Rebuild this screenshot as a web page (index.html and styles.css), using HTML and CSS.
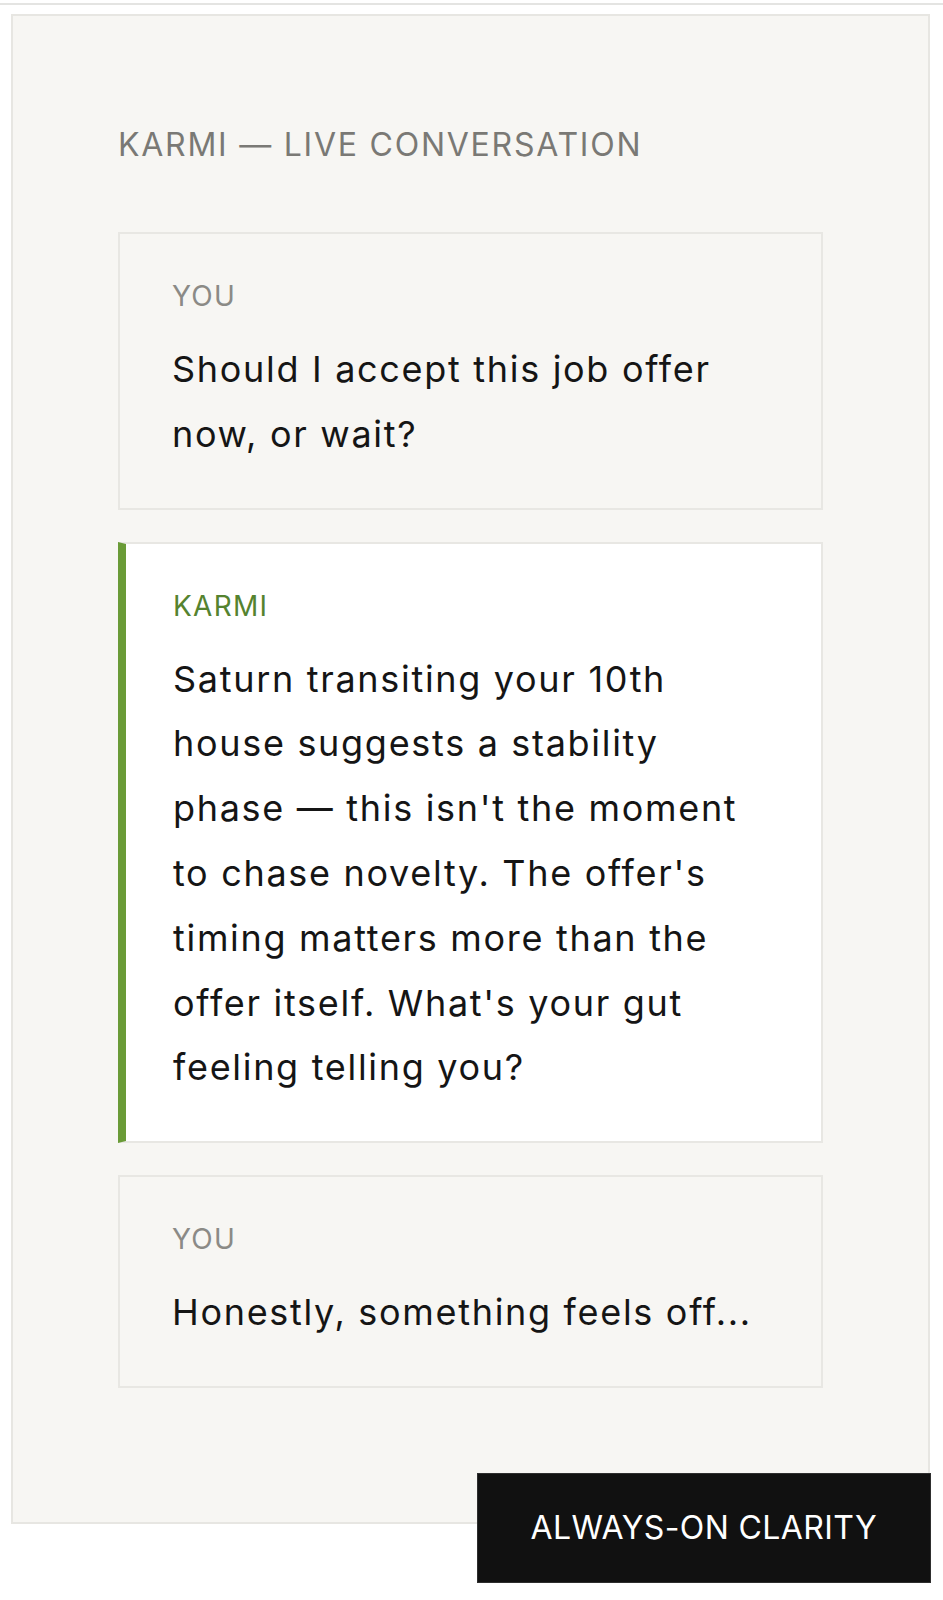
FILE: index.html
```html
<!DOCTYPE html>
<html>
<head>
    <title>Karmi — Live Conversation</title>
    <link rel="stylesheet" href="styles.css">
</head>
<body>

<div class="rule"></div>

<div class="stage">
    <section class="panel">
        <h2 class="panel-title">KARMI — LIVE CONVERSATION</h2>

        <div class="thread">
            <div class="msg msg-you">
                <div class="who">YOU</div>
                <p>Should I accept this job offer now, or wait?</p>
            </div>

            <div class="msg msg-karmi">
                <div class="who">KARMI</div>
                <p>Saturn transiting your 10th house suggests a stability phase — this isn't the moment to chase novelty. The offer's timing matters more than the offer itself. What's your gut feeling telling you?</p>
            </div>

            <div class="msg msg-you">
                <div class="who">YOU</div>
                <p>Honestly, something feels off...</p>
            </div>
        </div>
    </section>

    <div class="badge">ALWAYS-ON CLARITY</div>
</div>

</body>
</html>
```

FILE: styles.css
```css
body { margin: 0; font-family: Inter, "Noto Sans", sans-serif; background-color: #fff; color: #151515; }
.rule { height: 2px; margin-top: 3px; background-color: #e4e4e2; }

.stage { position: relative; margin: 9px 13px 0 11px; padding-bottom: 59px; }
.panel { padding: 105px 105px 134px; background-color: #f7f6f3; border: 2px solid #e7e6e2; }
.panel-title { margin: 0 0 63px; font-size: 32px; font-weight: 400; line-height: 48px; letter-spacing: 0.055em; color: #7a7975; }

.thread { display: flex; flex-direction: column; gap: 32px; }
.msg { padding: 41px 52px; border: 2px solid #e8e7e3; }
.msg-you { background-color: #f7f6f3; }
.msg-karmi { background-color: #fff; border-left: 8px solid #6a9b37; padding-left: 47px; }
.msg p { max-width: 580px; margin: 0; font-size: 36px; line-height: 64.8px; letter-spacing: 0.047em; }

.who { margin-bottom: 20px; font-size: 28px; line-height: 42px; letter-spacing: 0.045em; color: #8b8a86; }
.msg-karmi .who { color: #55832f; }

.badge { position: absolute; right: -1px; bottom: 0; padding: 30px 53px; background-color: #111; border: 1px solid #2e2e2e; color: #fff; font-size: 32px; line-height: 48px; letter-spacing: 0.012em; white-space: nowrap; }
```
